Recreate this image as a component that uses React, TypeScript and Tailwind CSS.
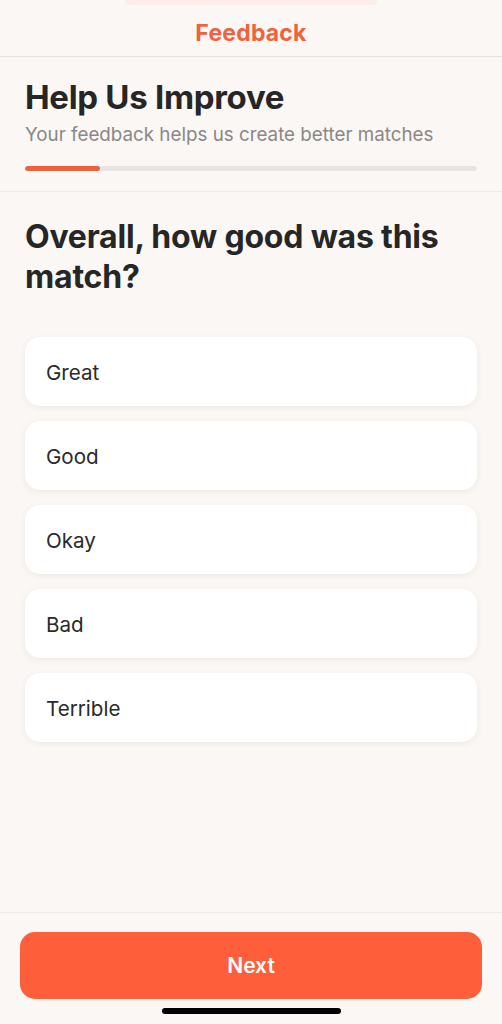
import React from "react";

export default function App() {
  const options = ["Great", "Good", "Okay", "Bad", "Terrible"];
  return (
    <div
      className="w-[502px] h-[1024px] bg-[#faf7f4] flex flex-col overflow-hidden"
      style={{ fontFamily: "Inter, 'Noto Sans', sans-serif" }}
    >
      <div className="h-[5px] mx-[125px] bg-[#fbeee9] rounded-b" />
      <div className="h-[52px] pt-[5px] flex items-center justify-center border-b border-[#e6e2de]">
        <span className="text-[23px] font-bold text-[#f2613e] tracking-[0.2px]">Feedback</span>
      </div>
      <div className="px-[25px] pt-[20px] pb-[20px] border-b border-[#efebe7]">
        <h1 className="text-[33px] leading-[40px] font-bold text-[#262626] tracking-[-0.3px]">Help Us Improve</h1>
        <p className="text-[18.8px] leading-[24px] text-[#8b8785] mt-[6px]">Your feedback helps us create better matches</p>
        <div className="mt-[19px] h-[5px] rounded-full bg-[#e8e4e1] overflow-hidden">
          <div className="h-full w-[75px] bg-[#f2613e] rounded-full" />
        </div>
      </div>
      <div className="flex-1 px-[25px] pt-[25px]">
        <h2 className="text-[32px] leading-[40px] font-bold text-[#262626] tracking-[-0.2px]">
          Overall, how good was this match?
        </h2>
        <div className="mt-[40px] flex flex-col gap-[15px]">
          {options.map((o) => (
            <div
              key={o}
              className="h-[69px] bg-white rounded-[15px] flex items-center px-[21px] pt-[3px] shadow-[0_2px_6px_rgba(120,90,70,0.08)]"
            >
              <span className="text-[20.6px] text-[#2a2a2a]">{o}</span>
            </div>
          ))}
        </div>
      </div>
      <div className="border-t border-[#efebe7] pt-[19px] px-[20px] pb-[10px] flex flex-col items-center">
        <button className="w-full h-[67px] rounded-[15px] bg-[#ff5e3b] text-white text-[21px] font-semibold">
          Next
        </button>
        <div className="mt-[9px] w-[179px] h-[6px] rounded-full bg-black" />
      </div>
    </div>
  );
}
